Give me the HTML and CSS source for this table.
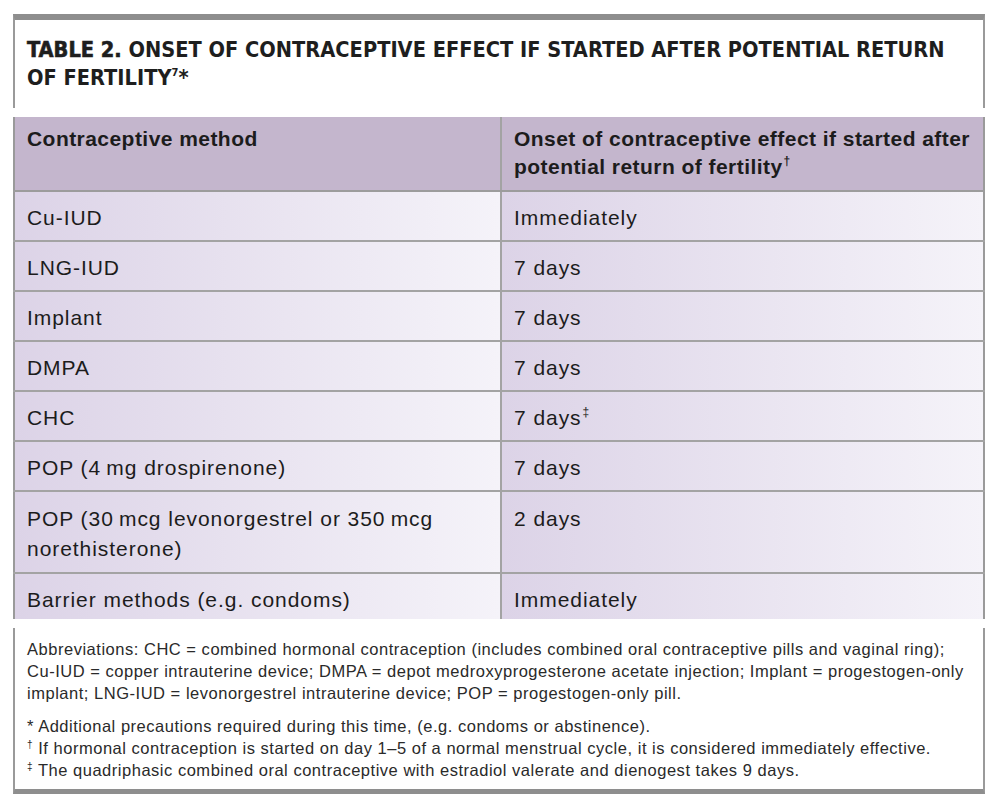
FILE: index.html
```html
<!DOCTYPE html>
<html>
<head>
<meta charset="utf-8">
<link rel="stylesheet" href="styles.css">
</head>
<body>
<div class="wrap">
  <div class="title-box">
    <h1 class="title"><span class="tnum">TABLE 2.</span> ONSET OF CONTRACEPTIVE EFFECT IF STARTED AFTER POTENTIAL RETURN<br>OF FERTILITY<sup>7</sup>*</h1>
  </div>
  <table class="tbl">
    <thead>
      <tr>
        <th class="c1">Contraceptive method</th>
        <th class="c2">Onset of contraceptive effect if started after potential return of fertility<sup>†</sup></th>
      </tr>
    </thead>
    <tbody>
      <tr><td>Cu-IUD</td><td>Immediately</td></tr>
      <tr><td>LNG-IUD</td><td>7 days</td></tr>
      <tr><td>Implant</td><td>7 days</td></tr>
      <tr><td>DMPA</td><td>7 days</td></tr>
      <tr><td>CHC</td><td>7 days<sup>‡</sup></td></tr>
      <tr><td>POP (4&#8201;mg drospirenone)</td><td>7 days</td></tr>
      <tr class="tall"><td>POP (30&#8201;mcg levonorgestrel or 350&#8201;mcg norethisterone)</td><td>2 days</td></tr>
      <tr class="last"><td>Barrier methods (e.g. condoms)</td><td>Immediately</td></tr>
    </tbody>
  </table>
  <div class="notes">
    <p class="abbr">Abbreviations: CHC = combined hormonal contraception (includes combined oral contraceptive pills and vaginal ring);<br>Cu-IUD = copper intrauterine device; DMPA = depot medroxyprogesterone acetate injection; Implant = progestogen-only<br>implant; LNG-IUD = levonorgestrel intrauterine device; POP = progestogen-only pill.</p>
    <p class="fn">* Additional precautions required during this time, (e.g. condoms or abstinence).<br><sup>†</sup> If hormonal contraception is started on day 1–5 of a normal menstrual cycle, it is considered immediately effective.<br><sup>‡</sup> The quadriphasic combined oral contraceptive with estradiol valerate and dienogest takes 9 days.</p>
  </div>
</div>
</body>
</html>
```
FILE: styles.css
```css
html, body {
  margin: 0;
  padding: 0;
  background: #ffffff;
}
.wrap {
  padding: 14px 15px 0 13px;
  font-family: "Liberation Sans", Arial, sans-serif;
  color: #1c1c1c;
}
.title-box {
  border-top: 6px solid #8e8e8e;
  border-left: 2px solid #9a9a9a;
  border-right: 2px solid #9a9a9a;
  height: 94px;
  padding: 16px 12px 0 12px;
  box-sizing: border-box;
}
.title {
  margin: 0;
  font-family: "DejaVu Sans Condensed", "DejaVu Sans", sans-serif;
  font-weight: bold;
  font-size: 21.6px;
  line-height: 28px;
  color: #1e1e1e;
  letter-spacing: 0;
  white-space: nowrap;
}
.title .tnum {
  -webkit-text-stroke: 0.6px #1e1e1e;
}
.title sup {
  font-size: 11px;
  vertical-align: 9px;
  line-height: 0;
}
.tbl {
  margin-top: 9px;
  width: 100%;
  border-collapse: collapse;
  border-left: 2px solid #9a9a9a;
  border-right: 2px solid #9a9a9a;
  font-size: 21px;
  letter-spacing: 0.95px;
}
.tbl th, .tbl td {
  vertical-align: top;
  text-align: left;
  padding: 12px 12px 0 12px;
  line-height: 28px;
}
.tbl th {
  background: #c4b6cd;
  font-weight: bold;
  letter-spacing: 0.45px;
  height: 65px;
  padding-top: 8px;
  border-bottom: 2px solid #9c9c9c;
}
.tbl .c1 {
  width: 461px;
}
.tbl th + th, .tbl td + td {
  border-left: 2px solid #a3a3a3;
}
.tbl td {
  background: linear-gradient(to right, #dcd3e7, #f5f3f9);
  border-bottom: 2px solid #a3a3a3;
  height: 36px;
}
.tbl tr.tall td {
  height: 68px;
  line-height: 30px;
}
.tbl tr.last td {
  border-bottom: none;
  height: 33px;
}
.tbl sup {
  font-size: 12px;
  vertical-align: 9px;
  line-height: 0;
  margin-left: 1px;
}
.notes {
  margin-top: 9px;
  border-left: 2px solid #9a9a9a;
  border-right: 2px solid #9a9a9a;
  border-bottom: 5px solid #8e8e8e;
  padding: 10px 8px 8px 12px;
  font-size: 16.5px;
  line-height: 22px;
  letter-spacing: 0.52px;
  color: #2a2a2a;
  white-space: nowrap;
}
.notes p {
  margin: 0;
}
.notes .abbr {
  margin-bottom: 11px;
}
.notes sup {
  font-size: 10px;
  vertical-align: 6px;
  line-height: 0;
}
```
